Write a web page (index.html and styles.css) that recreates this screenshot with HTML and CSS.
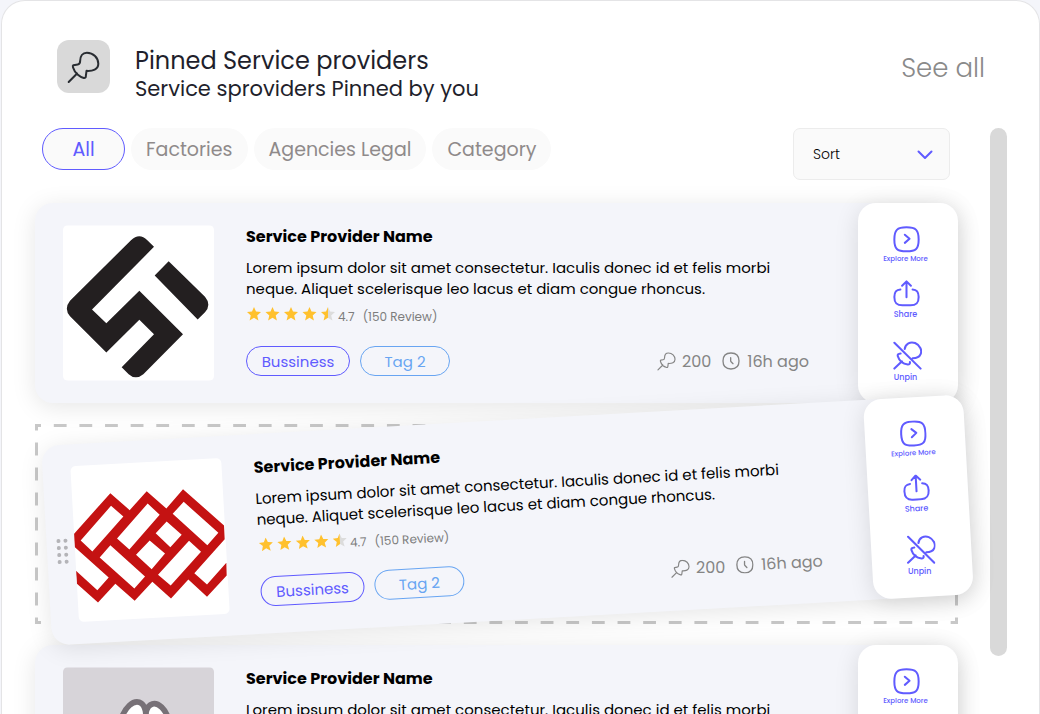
FILE: index.html
```html
<!DOCTYPE html>
<html lang="en">
<head>
<meta charset="utf-8">
<meta name="viewport" content="width=device-width, initial-scale=1">
<title>Pinned Service providers</title>
<link rel="stylesheet" href="styles.css">
</head>
<body>
<svg class="sprite" aria-hidden="true">
  <symbol id="pin" viewBox="202 156 98 98">
    <path d="M207 248 232 223M221 198Q218 200 220 205C225 222 240 233 252 236Q258 237 258 230L260 215C278 216 295 211 295 194C295 176 280 161 261 161C248 161 241 172 241 186Q241 195 234 196Z"/>
  </symbol>
  <symbol id="clock" viewBox="248 36 54 54">
    <path d="M275 39C291 39 299 47 299 63S291 87 275 87S251 79 251 63S259 39 275 39ZM274 53V62Q274 64 276 66L281 71"/>
  </symbol>
  <symbol id="explore" viewBox="130 94 80 80">
    <path d="M170 98C198 98 206 106 206 134S198 169 170 169S134 162 134 134S142 98 170 98ZM165 120 179 132 165 144"/>
  </symbol>
  <symbol id="share" viewBox="130 252 80 80">
    <path d="M152 280C138 281 134 288 134 302C134 320 141 327 158 327H182C199 327 206 320 206 302C206 288 202 281 188 280M170 303V257M157 269 170 256 183 269"/>
  </symbol>
  <symbol id="unpin" viewBox="130 436 84 84">
    <path d="M134 441 210 516M134 516 156 495M164 459C166 444 180 437 194 442C208 448 215 463 210 474C206 484 196 486 187 486M152 472Q142 473 144 480C148 493 160 502 173 504Q180 504 179 497"/>
  </symbol>
  <symbol id="stars" viewBox="0 0 88 14">
    <path id="star" fill="#ffc12e" d="M7 0 9 4.6 14 5 10.200 8.400 11.400 13.400 7 10.700 2.600 13.400 3.800 8.400 0 5 5 4.600Z"/>
    <use href="#star" x="18.500"/><use href="#star" x="37"/><use href="#star" x="55.500"/>
    <path fill="#dcdcdc" d="M81 0 83 4.600 88 5 84.200 8.400 85.400 13.400 81 10.700Z"/>
    <path fill="#ffc12e" d="M81 0V10.700L76.600 13.400 77.800 8.400 74 5 79 4.600Z"/>
  </symbol>
</svg>

<main class="board">
  <header class="board-header">
    <span class="badge"><svg class="icon"><use href="#pin"/></svg></span>
    <div class="heading">
      <h1>Pinned Service providers</h1>
      <p>Service sproviders Pinned by you</p>
    </div>
    <a class="see-all" href="#all">See all</a>
  </header>

  <div class="board-body">
    <div class="content">
      <div class="toolbar">
        <div class="tabs">
          <button class="tab is-active" type="button">All</button>
          <button class="tab" type="button">Factories</button>
          <button class="tab" type="button">Agencies Legal</button>
          <button class="tab" type="button">Category</button>
        </div>
        <div class="sort">
          <select aria-label="Sort"><option>Sort</option></select>
          <svg class="chevron" viewBox="0 0 16 10" aria-hidden="true"><path d="M1.500 1.500 8 8 14.500 1.500"/></svg>
        </div>
      </div>

      <div class="list">
        <article class="card">
          <svg class="logo" viewBox="99 92 453 465" aria-hidden="true">
            <path fill="#fff" d="M99 92H552V557H99Z"/>
            <path fill="#231f20" d="M372 156 352 136Q328 113 303 136L120 318Q101 342 120 364L229 473 328 375 372 418 275 517 296 538Q317 557 340 538L459 418 328 288 229 385 186 344ZM416 199 374 242 503 374 525 352Q545 330 525 306Z"/>
          </svg>
          <div class="info">
            <h2>Service Provider Name</h2>
            <p>Lorem ipsum dolor sit amet consectetur. Iaculis donec id et felis morbi neque. Aliquet scelerisque leo lacus et diam congue rhoncus.</p>
            <div class="rating"><svg class="stars" role="img" aria-label="Rating"><use href="#stars"/></svg><span>4.7</span><span>(150 Review)</span></div>
            <div class="foot">
              <span class="tag tag-main">Bussiness</span>
              <span class="tag">Tag 2</span>
              <span class="meta"><svg class="icon upright"><use href="#pin"/></svg><span class="upright">200</span><svg class="icon upright clock"><use href="#clock"/></svg><span>16h ago</span></span>
            </div>
          </div>
          <div class="actions">
            <button class="explore" type="button"><svg class="icon"><use href="#explore"/></svg><span>Explore More</span></button>
            <button class="share" type="button"><svg class="icon"><use href="#share"/></svg><span>Share</span></button>
            <button class="unpin upright" type="button"><svg class="icon"><use href="#unpin"/></svg><span>Unpin</span></button>
          </div>
        </article>

        <div class="slot">
          <article class="card is-dragged">
            <button class="handle" type="button" aria-label="Move card"><i></i><i></i><i></i><i></i><i></i><i></i><i></i><i></i></button>
            <svg class="logo" viewBox="122 155 453 465" aria-hidden="true">
              <path fill="#fff" d="M100 100H700V700H100Z"/>
              <path fill="#c41212" fill-rule="evenodd" transform="rotate(3.200 122 155)" d="M132 357 242 234 300 285 351 228 410 280 460 222 583 331 585 372 494 474 532 508 590 443 591 481 532 545 476 493 424 550 368 500 315 557 257 506 205 562 141 505 138 466 203 525 237 487 134 395ZM244 272 281 304 188 409 153 376ZM354 265 390 299 299 403 262 370ZM462 260 566 353 533 390 429 296ZM411 319 456 359 422 396 378 354ZM360 376 406 415 366 462 319 419ZM242 390 346 484 314 520 210 427ZM478 377 514 410 423 511 385 479Z"/>
            </svg>
            <div class="info">
              <h2>Service Provider Name</h2>
              <p>Lorem ipsum dolor sit amet consectetur. Iaculis donec id et felis morbi neque. Aliquet scelerisque leo lacus et diam congue rhoncus.</p>
              <div class="rating"><svg class="stars" role="img" aria-label="Rating"><use href="#stars"/></svg><span>4.7</span><span>(150 Review)</span></div>
              <div class="foot">
                <span class="tag tag-main">Bussiness</span>
                <span class="tag">Tag 2</span>
                <span class="meta"><svg class="icon upright"><use href="#pin"/></svg><span class="upright">200</span><svg class="icon upright clock"><use href="#clock"/></svg><span>16h ago</span></span>
              </div>
            </div>
            <div class="actions">
              <button class="explore" type="button"><svg class="icon"><use href="#explore"/></svg><span>Explore More</span></button>
              <button class="share" type="button"><svg class="icon"><use href="#share"/></svg><span>Share</span></button>
              <button class="unpin upright" type="button"><svg class="icon"><use href="#unpin"/></svg><span>Unpin</span></button>
            </div>
          </article>
        </div>

        <article class="card">
          <svg class="logo" viewBox="129 114 453 465" aria-hidden="true">
            <path fill="#d7d4d9" d="M129 114H582V579H129Z"/>
            <g fill="#fff" stroke="#777177" stroke-width="17"><ellipse cx="413" cy="279" rx="34" ry="58" transform="rotate(-16 413 279)"/><ellipse cx="338" cy="279" rx="36" ry="64" transform="rotate(18 338 279)"/></g>
          </svg>
          <div class="info">
            <h2>Service Provider Name</h2>
            <p>Lorem ipsum dolor sit amet consectetur. Iaculis donec id et felis morbi neque. Aliquet scelerisque leo lacus et diam congue rhoncus.</p>
          </div>
          <div class="actions">
            <button class="explore" type="button"><svg class="icon"><use href="#explore"/></svg><span>Explore More</span></button>
          </div>
        </article>
      </div>
    </div>
    <div class="scrollbar"></div>
  </div>
</main>
</body>
</html>
```
FILE: styles.css
```css
* { box-sizing: border-box; }

body {
  margin: 0;
  background: #f4f5fa;
  font-family: Poppins, Inter, "Open Sans", sans-serif;
  color: #000;
}

h1, h2, p { margin: 0; font-weight: 400; }
button { border: 0; background: none; font: inherit; color: inherit; padding: 0; cursor: pointer; }

.sprite { position: absolute; width: 0; height: 0; }
.icon { fill: none; stroke: currentColor; stroke-linecap: round; stroke-linejoin: round; flex: none; }

.board {
  height: 100vh;
  margin-left: 1px;
  overflow: hidden;
  background: #fff;
  border: 1px solid #e4e4e6;
  border-bottom: 0;
  border-radius: 24px 24px 0 0;
}

.board-header {
  display: flex;
  align-items: flex-start;
  padding: 39px 54px 0 55px;
}
.badge {
  display: grid;
  place-items: center;
  width: 53px;
  height: 53px;
  margin-right: 25px;
  border-radius: 12px;
  background: #d9d9d9;
  color: #292d32;
}
.badge .icon { width: 33px; height: 33px; margin-top: 2px; stroke-width: 6; }
.heading { flex: 1; padding-top: 7px; color: #1f1f2c; }
.heading h1 { font-size: 24px; line-height: 28px; }
.heading p { font-size: 21px; line-height: 28px; }
.see-all {
  padding-top: 12px;
  font-size: 26px;
  line-height: 32px;
  font-weight: 300;
  color: #8a8a8a;
  text-decoration: none;
}

.board-body { display: flex; padding: 25px 32px 0 33px; }
.content { flex: 1; }
.scrollbar {
  width: 17px;
  height: 528px;
  margin-left: 32px;
  border-radius: 9px;
  background: #d9d9d9;
}

.toolbar {
  display: flex;
  justify-content: space-between;
  align-items: flex-start;
  padding: 0 8px 23px 7px;
}
.tabs { display: flex; gap: 6px; }
.tab {
  height: 42px;
  padding: 1px 15px 0;
  border-radius: 21px;
  background: #fafafa;
  font-size: 19px;
  color: #8f8a8a;
}
.tab.is-active {
  width: 83px;
  border: 1px solid #605bff;
  color: #605bff;
}
.sort { position: relative; width: 157px; }
.sort select {
  appearance: none;
  width: 100%;
  height: 52px;
  padding: 0 19px;
  border: 1px solid #ececec;
  border-radius: 7px;
  background: #fafafa;
  font: 300 14px Poppins, Inter, "Open Sans", sans-serif;
  color: #000;
}
.chevron {
  position: absolute;
  right: 17px;
  top: 22px;
  width: 16px;
  height: 10px;
  fill: none;
  stroke: #605bff;
  stroke-width: 2;
  stroke-linecap: round;
  stroke-linejoin: round;
  pointer-events: none;
}

.list { display: grid; gap: 21px; }
.card {
  position: relative;
  display: flex;
  height: 200px;
  border-radius: 18px;
  background: #f4f5fa;
  box-shadow: 0 4px 24px rgba(0, 0, 0, .1);
}
.logo {
  flex: none;
  width: 151px;
  height: 156px;
  margin: 22px 32px 22px 28px;
  border-radius: 5px;
}
.info { flex: 1; padding: 22px 49px 0 0; }
.info h2 { font-size: 16px; line-height: 24px; font-weight: 700; }
.info p { margin-top: 8px; font-size: 15px; line-height: 21px; }
.rating {
  display: flex;
  align-items: center;
  height: 20px;
  margin-top: 6px;
  font-size: 12px;
  color: #7d7d7d;
}
.rating span { margin: 3px 8px 0 0; }
.stars { width: 88px; height: 14px; margin: 0 3px 3px 1px; }
.foot { display: flex; align-items: center; gap: 10px; margin-top: 21px; }
.tag {
  width: 90px;
  height: 30px;
  border: 1px solid #68a5f2;
  border-radius: 15px;
  font-size: 15px;
  line-height: 30px;
  text-align: center;
  color: #68a5f2;
}
.tag-main { width: 104px; border-color: #605bff; color: #605bff; }
.meta {
  display: flex;
  align-items: center;
  margin-left: auto;
  font-size: 16px;
  color: #858585;
}
.meta .icon { width: 19px; height: 19px; margin-right: 6px; stroke-width: 6; }
.meta .clock { width: 18px; height: 18px; margin: 0 7px 0 11px; stroke-width: 4; }

.actions {
  display: flex;
  flex-direction: column;
  align-items: center;
  width: 100px;
  padding: 23px 5px 0 0;
  border-radius: 18px;
  background: #fff;
  box-shadow: 0 4px 24px rgba(0, 0, 0, .12);
  color: #605bff;
}
.actions button { display: grid; justify-items: center; }
.actions .icon { width: 27px; height: 27px; margin-left: 2px; stroke-width: 6; }
.actions span { font-size: 8px; line-height: 12px; font-weight: 500; }
.actions .explore span { font-size: 7px; line-height: 12px; }
.share { margin-top: 15px; }
.unpin { margin-top: 20px; }
.actions .share .icon { margin-bottom: 2px; }
.actions .unpin .icon { width: 29px; height: 29px; margin-bottom: 2px; margin-left: 3px; }

.slot {
  position: relative;
  z-index: 1;
  background:
    linear-gradient(90deg, transparent 25%, #c8c8c8 25% 75%, transparent 75%) top / 26px 3px round no-repeat,
    linear-gradient(90deg, transparent 25%, #c8c8c8 25% 75%, transparent 75%) bottom / 26px 3px round no-repeat,
    linear-gradient(transparent 25%, #c8c8c8 25% 75%, transparent 75%) left / 3px 25px no-repeat round,
    linear-gradient(transparent 25%, #c8c8c8 25% 75%, transparent 75%) right / 3px 25px no-repeat round;
}
.is-dragged { transform: translate(11px, -4px) rotate(-3.2deg); }
.is-dragged .upright { transform: rotate(3.2deg); }
.handle {
  position: absolute;
  left: 10px;
  top: 94px;
  display: grid;
  grid-template-columns: 4px 4px;
  gap: 3px;
}
.handle i { width: 4px; height: 4px; border-radius: 50%; background: #b4b4b8; }
```
